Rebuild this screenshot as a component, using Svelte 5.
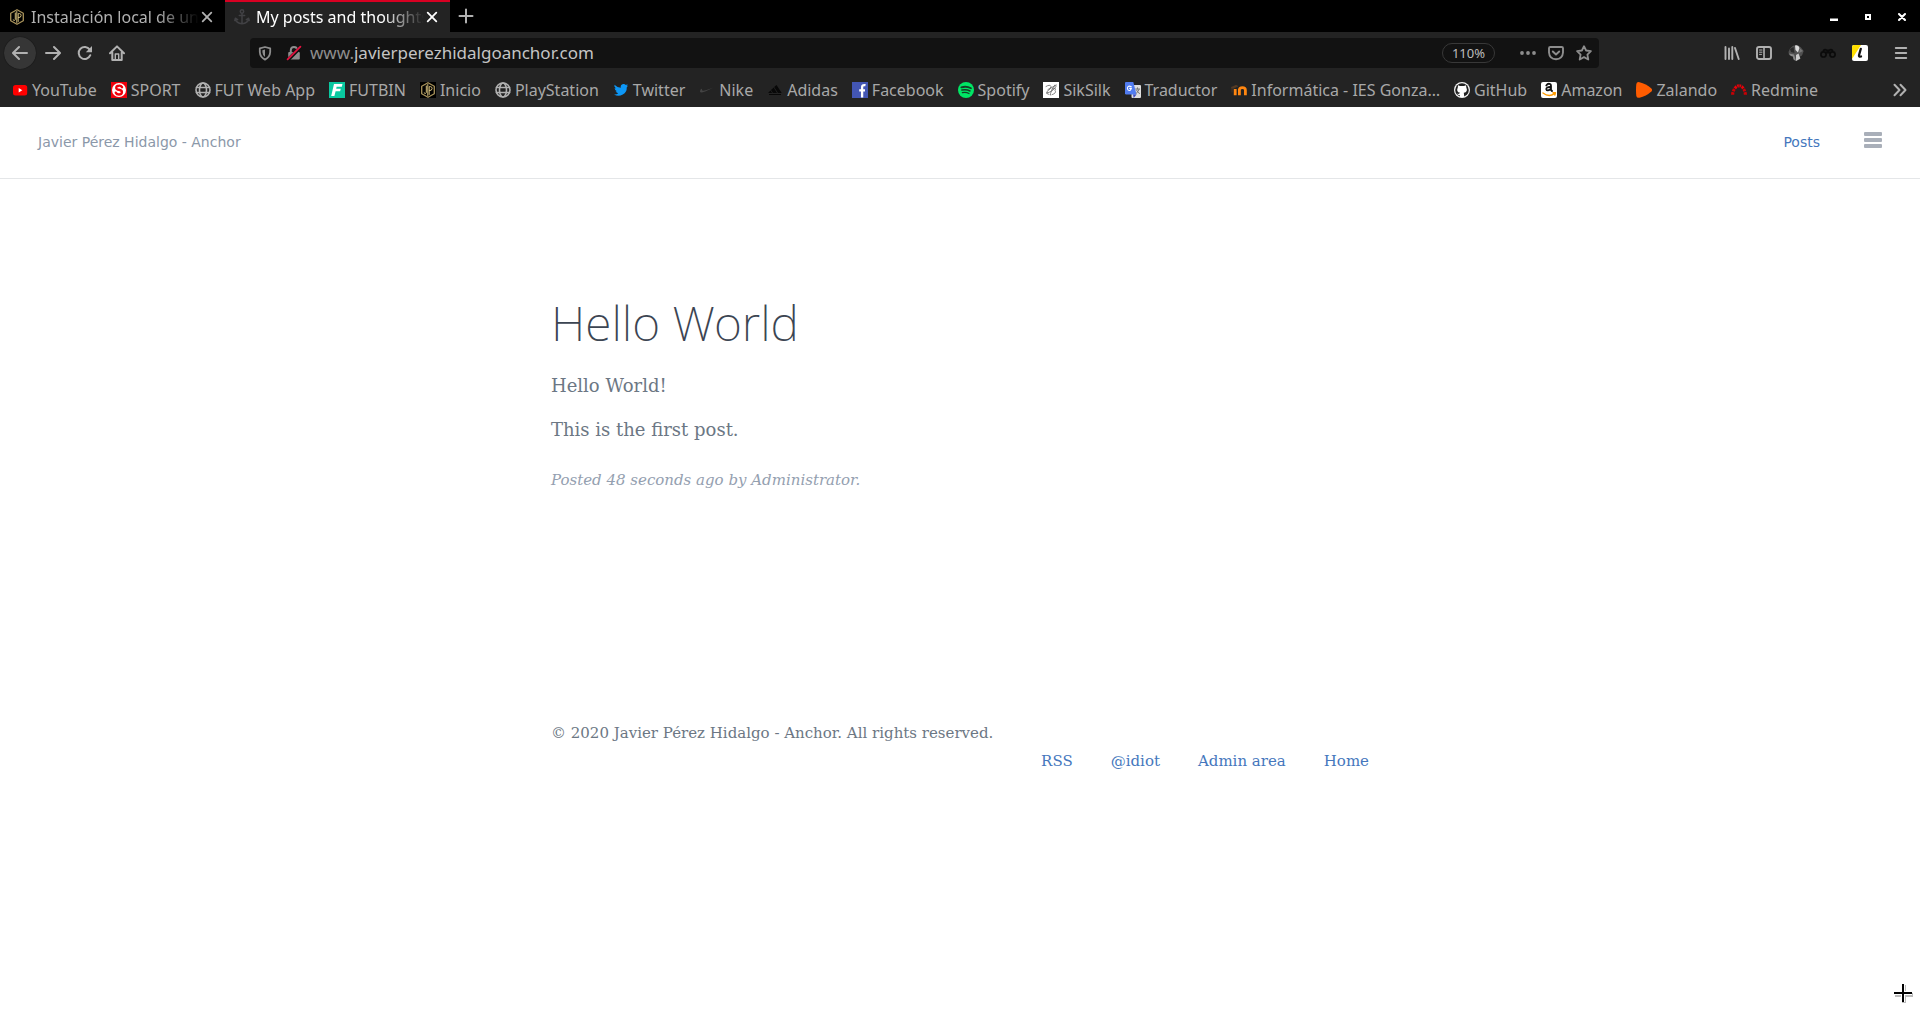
<script>
  const tabs = [
    { title: 'Instalación local de un', icon: 'jp', active: false },
    { title: 'My posts and thoughts', icon: 'anchor', active: true }
  ];
  const bookmarks = [
    ['youtube', 'YouTube'],
    ['sport', 'SPORT'],
    ['globe', 'FUT Web App'],
    ['futbin', 'FUTBIN'],
    ['jpdark', 'Inicio'],
    ['globe', 'PlayStation'],
    ['twitter', 'Twitter'],
    ['nike', 'Nike'],
    ['adidas', 'Adidas'],
    ['facebook', 'Facebook'],
    ['spotify', 'Spotify'],
    ['siksilk', 'SikSilk'],
    ['translate', 'Traductor'],
    ['moodle', 'Informática - IES Gonza…'],
    ['github', 'GitHub'],
    ['amazon', 'Amazon'],
    ['zalando', 'Zalando'],
    ['redmine', 'Redmine']
  ];
  const navButtons = [
    ['back', 'Back'],
    ['forward', 'Forward'],
    ['reload', 'Reload'],
    ['home', 'Home']
  ];
  const urlButtons = [
    ['dots', 'Page actions'],
    ['pocket', 'Save to Pocket'],
    ['star', 'Bookmark this page']
  ];
  const tools = [
    ['library', 'Library'],
    ['sidebar', 'Sidebars'],
    ['avatar', 'Account'],
    ['binoculars', 'Search extension'],
    ['l', 'Extension']
  ];
  const footerLinks = ['RSS', '@idiot', 'Admin area', 'Home'];
  let address = $state('javierperezhidalgoanchor.com');
</script>

{#snippet icon(name)}
  <svg class="icon" viewBox="0 0 16 16" width="16" height="16" aria-hidden="true" fill="none" stroke-linecap="round" stroke-linejoin="round">
    {#if name === 'jp' || name === 'jpdark'}
      {#if name === 'jpdark'}<rect width="16" height="16" fill="#000" />{/if}
      <path d="M8 .7 14.3 4.3V11.7L8 15.3 1.7 11.7V4.3Z" stroke="#a8925a" stroke-width="1.3" />
      <path d="M6.3 4V10.5Q6 12.3 4.2 11M9.2 12.5V4.6H10.5Q12.2 4.8 12.1 6.6 12 8.8 9.4 8.6M7.8 2.5V13.5" stroke="#d3bd7c" stroke-width="1" />
    {:else if name === 'anchor'}
      <g stroke="#414144" stroke-width="1.5"><circle cx="8" cy="2.5" r="1.7" /><path d="M8 4.5V14.6M5.3 6.5H10.7M1.3 9.7Q2 14.3 8 14.8 14 14.3 14.7 9.7M.8 11.5 1.4 9.2 3.6 10.6M15.2 11.5 14.6 9.2 12.4 10.6" /></g>
    {:else if name === 'close'}
      <path d="M3.7 3.7 12.3 12.3M12.3 3.7 3.7 12.3" stroke="currentColor" stroke-width="1.8" />
    {:else if name === 'plus'}
      <path d="M8 1.5V14.5M1.5 8H14.5" stroke="currentColor" stroke-width="2" />
    {:else if name === 'minimise'}
      <path d="M4 9.5H12V12H4Z" fill="#fff" />
    {:else if name === 'maximise'}
      <path d="M6 6H10V10H6Z" stroke="#fff" stroke-width="2" stroke-linejoin="miter" />
    {:else if name === 'closewin'}
      <path d="M5 5 11 11M11 5 5 11" stroke="#fff" stroke-width="2.1" />
    {:else if name === 'back'}
      <path d="M1.2 8H15M7 2 1 8 7 14" stroke="currentColor" stroke-width="2" />
    {:else if name === 'forward'}
      <path d="M14.8 8H1M9 2 15 8 9 14" stroke="currentColor" stroke-width="2" />
    {:else if name === 'reload'}
      <path d="M13.3 10.2A6 6 0 1 1 12.7 4.6" stroke="currentColor" stroke-width="2" /><path d="M15 1V7.2H8.8Z" fill="currentColor" />
    {:else if name === 'home'}
      <path d="M1 8.2 8 1.4 15 8.2M3.3 7.5V15H12.7V7.5" stroke="currentColor" stroke-width="2" /><path d="M6.3 15V9H9.7V15" stroke="currentColor" stroke-width="1.4" />
    {:else if name === 'shield'}
      <path d="M8 2 13.2 3.3V7Q13 12 8 14.6 3 12 2.8 7V3.3Z" stroke="currentColor" stroke-width="1.8" /><path d="M8 4.6V12Q5.5 10.2 5.4 7V5.2Z" fill="currentColor" />
    {:else if name === 'lock'}
      <rect x="2.2" y="7" width="11.6" height="7.5" rx="1" fill="#8d8d8d" /><path d="M4.8 8V5Q5 2 8 2 11 2 11.2 5V8" stroke="#8d8d8d" stroke-width="2" />
      <path d="M2.4 14.4 14.6 2.2" stroke="#111" stroke-width="3.6" /><path d="M1.6 14.4 14.4 1.6" stroke="#e3123f" stroke-width="1.8" />
    {:else if name === 'dots'}
      <g fill="currentColor"><circle cx="2" cy="8" r="1.9" /><circle cx="8" cy="8" r="1.9" /><circle cx="14" cy="8" r="1.9" /></g>
    {:else if name === 'pocket'}
      <path d="M2.3 2H13.7Q15 2 15 3.3V7.5Q14.5 14 8 14.3 1.5 14 1 7.5V3.3Q1 2 2.3 2ZM4.8 6.5 8 9.5 11.2 6.5" stroke="currentColor" stroke-width="1.9" />
    {:else if name === 'star'}
      <path d="M8 1.2 10.1 5.5 14.9 6.2 11.4 9.6 12.3 14.5 8 12.1 3.7 14.5 4.6 9.6 1.1 6.2 5.9 5.5Z" stroke="currentColor" stroke-width="1.8" />
    {:else if name === 'library'}
      <path d="M1.5 2V14M5 3.5V14M8.3 2V14M11 3 14.7 14" stroke="currentColor" stroke-width="1.9" />
    {:else if name === 'sidebar'}
      <rect x="1" y="2" width="14" height="12" rx="2" stroke="currentColor" stroke-width="1.9" /><path d="M8 2V14" stroke="currentColor" stroke-width="1.6" /><path d="M3.5 5H6M3.5 7.2H6M3.5 9.4H5.5" stroke="currentColor" stroke-width="1" />
    {:else if name === 'avatar'}
      <path d="M5 .8Q10-1 13 2.5L15.7 6 14 10.5 12 11.5 12.3 14 8 16 5.2 14.5 5 11.5 1 10 .5 7 2 3.5Z" fill="#505050" /><path d="M7 .6Q10.5-.5 11.5 3L10 7.5 7.5 5Z" fill="#ddd" /><path d="M1 8.5 6 9.5 8 15.7Q5 15 5 11.5 2 11 1 8.5Z" fill="#8a8a8a" /><path d="M8 10 10.5 8.5 12.3 13.5 8 16Z" fill="#ccc" /><path d="M2 4 5.5 2 6.5 8 3 7Z" fill="#292929" /><path d="M12 3.5 15 6 11 8Z" fill="#777" />
    {:else if name === 'binoculars'}
      <g stroke="#0b0b0b"><circle cx="3.5" cy="9.4" r="2.6" stroke-width="1.7" /><circle cx="12.5" cy="9.4" r="2.6" stroke-width="1.7" /><path d="M3.5 5.6Q5 3.6 6.8 5.5H9.2Q11 3.6 12.5 5.6M6.5 7.5H9.5" stroke-width="1.8" /></g>
    {:else if name === 'l'}
      <rect width="16" height="16" rx="2" fill="#fff" /><path d="M2 0H9L0 14V2Q0 0 2 0Z" fill="#ffde00" /><path d="M8.8 3.8 7 10.3Q6.7 12 9 11.5" stroke="#111" stroke-width="2.3" />
    {:else if name === 'menu'}
      <path d="M2.8 3H13.2M2.8 8H13.2M2.8 13H13.2" stroke="currentColor" stroke-width="2" />
    {:else if name === 'more'}
      <path d="M2.5 2.8 7.5 8 2.5 13.2M8.5 2.8 13.5 8 8.5 13.2" stroke="currentColor" stroke-width="2" />
    {:else if name === 'youtube'}
      <rect x="1" y="3" width="14.2" height="10.6" rx="2.5" fill="#f00" /><path d="M6.7 6 10.3 8.2 6.7 10.4Z" fill="#fff" />
    {:else if name === 'sport'}
      <rect width="16" height="16" fill="#f0000c" /><circle cx="8" cy="8" r="7" fill="#fff" /><path d="M11 5.2Q10 3.4 7.8 3.7 5 4 5.3 6.1 5.5 7.5 8 7.8 11 8.2 10.9 10.3 10.6 12.5 8 12.5 5.5 12.5 4.8 10.7" stroke="#f0000c" stroke-width="2.4" />
    {:else if name === 'globe'}
      <g stroke="#b1b1b1" stroke-width="1.6"><circle cx="8" cy="8" r="7" /><ellipse cx="8" cy="8" rx="3.5" ry="7" /><path d="M1.5 5.5H14.5M1.5 10.5H14.5" /></g>
    {:else if name === 'futbin'}
      <rect width="16" height="16" fill="#0ac8a0" /><path d="M5 2H13.5L12.8 4.8H7.6L7.2 6.7H11.8L11.1 9.2H6.6L5.4 14H2.2Z" fill="#fff" />
    {:else if name === 'twitter'}
      <path d="M1.5 2.8Q4 5.6 7.8 5.7 7.2 2.6 10.2 2 11.8 1.8 12.8 2.9L14.7 2.2 13.6 4 15.2 3.6 13.8 5.2Q14 10 9.8 12.5 5.3 15 1 12.4 3.5 12.6 5.3 11.2 3.3 10.9 2.6 9.2H4Q1.7 8.3 1.6 6L3 6.4Q.6 4.6 1.5 2.8Z" fill="#0d97f6" />
    {:else if name === 'nike'}
      <path d="M2 7Q0 10 2 10.5 5 10.5 15 5.3 7 8.7 4.1 8.8 2.4 8.8 3 6.8Z" fill="#444" />
    {:else if name === 'adidas'}
      <path d="M1 11 3.5 8.5 5.2 11ZM4 8 6.7 5.5 10 11H6ZM7.2 5 9.5 3 14.7 11H11ZM2 12H14V13H2Z" fill="#080808" />
    {:else if name === 'facebook'}
      <rect width="16" height="16" fill="#4356b4" /><path d="M13.5 3.2Q9.8 2.5 10.1 5.5V15.5M7.2 8.3H13" stroke="#fff" stroke-width="2.3" stroke-linecap="butt" />
    {:else if name === 'spotify'}
      <circle cx="8" cy="8" r="8" fill="#00e665" /><g stroke="#143d26"><path d="M3.3 5.3Q8.5 3.8 13 6.2" stroke-width="1.8" /><path d="M3.9 8.1Q8.3 7 12 9" stroke-width="1.5" /><path d="M4.3 10.7Q8 9.8 11 11.5" stroke-width="1.2" /></g>
    {:else if name === 'siksilk'}
      <rect width="16" height="16" fill="#fff" /><path d="M3 4.5Q7 2 8 4.5 8 7 4 9.5 2.6 12 6 12.5M5 7.5 13.5 3M11.8 3Q7 10 7.4 13M9 7Q14 5 12 8.5 14 11 9 12.7M3.5 11Q10 10 13 4.5" stroke="#666" stroke-width=".8" />
    {:else if name === 'translate'}
      <rect x="6.5" y="3" width="9.5" height="13" rx="1" fill="#dedede" /><path d="M1 0H8.3L11.5 12.5H1.2Q0 12.5 0 11.3V1Q0 0 1 0Z" fill="#517cf0" /><path d="M8 12.5H11.5L8.7 16Z" fill="#3b49bd" /><path d="M6.3 4.7Q3 3 2.4 6 2.7 9 5.3 8.3L6.4 6.4H4.7" stroke="#fff" stroke-width="1.1" /><path d="M10.7 7H14.7M12.5 5.8V7M14 7.4Q13.3 10 11.2 11.4M11.6 8.2Q12.3 10.5 14.5 11.5" stroke="#777" stroke-width="1" />
    {:else if name === 'moodle'}
      <path d="M0 5.5 5 3.3 6.8 4.2 2.6 6.2ZM1 6V10" fill="#553b25" stroke="#553b25" stroke-width=".7" /><path d="M4.2 7V13.3M8.4 13.3V7.6Q8.8 5.6 11.4 5.6 14.3 5.6 14.4 8V13.3" stroke="#ff8610" stroke-width="2.8" stroke-linecap="butt" />
    {:else if name === 'github'}
      <circle cx="8" cy="8" r="8" fill="#f4f4f4" /><circle cx="8" cy="8" r="6.8" fill="#202020" /><path d="M4 3.2 6 4.1H10L12 3.2 12.3 5.4Q14.3 9.7 9.8 10.8L10.3 15H5.8V13Q4 13.4 3 11.5 5 12.6 6.1 10.8 1.8 9.7 3.8 5.4Z" fill="#fff" />
    {:else if name === 'amazon'}
      <rect width="16" height="16" rx="2" fill="#fff" /><path d="M5.3 3.5Q7 .8 9.5 2.2 10 3 10 4V8L11 9M9.7 5Q5.2 4.8 5.3 7.2 6 9.8 9.6 7" stroke="#111" stroke-width="1.8" /><path d="M2 11Q8 15.5 13.4 11.6M12 10.8 14.5 10.8 13.8 13" stroke="#ff9b00" stroke-width="1.4" />
    {:else if name === 'zalando'}
      <path d="M.3 2Q.7-.3 3.5.2 10 1.5 15.4 6.4 16.7 8 15.4 9.6 10 14.5 3.5 15.8.7 16.2.3 14-.3 8 .3 2Z" fill="#ff5c00" />
    {:else if name === 'redmine'}
      <g fill="#c90005"><path d="M0 12.8.4 9.8 3.4 10.4 3.2 12.8ZM.8 9 2 6.2 4.6 7.8 3.8 9.8Z" /><path d="M2.6 5.4 4.8 3.2 6.4 5.8 5 7.2ZM5.6 2.8 7.8 2.2V5.4L6.8 5.6ZM8.4 2.2 10.6 2.8 9.4 5.6 8.4 5.4ZM11.4 3.2 13.5 5.4 11.2 7.2 9.9 5.8Z" fill="#ed0008" /><path d="M14 6.2 15.2 9 12.2 9.8 11.6 7.8ZM15.6 9.8 16 12.8H12.8L12.6 10.4Z" /></g>
    {/if}
  </svg>
{/snippet}

<div class="browser">
  <div class="tabs">
    {#each tabs as tab}
      <div class="tab" class:active={tab.active}>
        {@render icon(tab.icon)}
        <span class="title">{tab.title}</span>
        <button aria-label="Close tab">{@render icon('close')}</button>
      </div>
    {/each}
    <button class="new" aria-label="New tab">{@render icon('plus')}</button>
    <div class="window">
      <button aria-label="Minimise">{@render icon('minimise')}</button>
      <button aria-label="Maximise">{@render icon('maximise')}</button>
      <button aria-label="Close window">{@render icon('closewin')}</button>
    </div>
  </div>

  <div class="toolbar">
    <div class="history">
      {#each navButtons as [name, label]}
        <button class={name} aria-label={label}>{@render icon(name)}</button>
      {/each}
    </div>
    <div class="urlbar">
      <span class="security">{@render icon('shield')}{@render icon('lock')}</span>
      <label for="address">www.</label>
      <input id="address" type="text" spellcheck="false" bind:value={address} />
      <button class="zoom">110%</button>
      <div class="actions">
        {#each urlButtons as [name, label]}
          <button aria-label={label}>{@render icon(name)}</button>
        {/each}
      </div>
    </div>
    <div class="tools">
      {#each tools as [name, label]}
        <button aria-label={label}>{@render icon(name)}</button>
      {/each}
      <button class="menu" aria-label="Open menu">{@render icon('menu')}</button>
    </div>
  </div>

  <nav class="bookmarks" aria-label="Bookmarks">
    {#each bookmarks as [name, label]}
      <a href="#{label}">{@render icon(name)}<span>{label}</span></a>
    {/each}
    <button aria-label="More bookmarks">{@render icon('more')}</button>
  </nav>
</div>

<header>
  <a class="brand" href="#home">Javier Pérez Hidalgo - Anchor</a>
  <nav>
    <a href="#posts">Posts</a>
    <button class="bars" aria-label="Show search and menu"><i></i><i></i><i></i></button>
  </nav>
</header>

<div class="wrap">
  <main>
    <h1>Hello World</h1>
    <p>Hello World!</p>
    <p>This is the first post.</p>
    <p class="meta">Posted 48 seconds ago by Administrator.</p>
  </main>
  <footer>
    <small>© 2020 Javier Pérez Hidalgo - Anchor. All rights reserved.</small>
    <ul>
      {#each footerLinks as link}
        <li><a href="#{link}">{link}</a></li>
      {/each}
    </ul>
  </footer>
</div>

<svg class="cursor" viewBox="0 0 24 24" width="24" height="24" aria-hidden="true">
  <path d="M13 4V22M4 14H22" stroke="#bbb" stroke-width="4" />
  <path d="M12 3V21M3 12H21" stroke="#fff" stroke-width="4" />
  <path d="M12 3V21M3 12H21" stroke="#000" stroke-width="2" />
</svg>

<style>
  :global(body) {
    background: #fff;
  }
  a {
    color: inherit;
    text-decoration: none;
  }
  button {
    display: flex;
    align-items: center;
    justify-content: center;
    padding: 0;
    border: 0;
    background: none;
    color: inherit;
    font: inherit;
  }
  .icon {
    display: block;
    flex: none;
  }
  .browser {
    background: #232323;
    color: #b1b1b1;
    font: 16px/24px 'Noto Sans', sans-serif;
  }
  .tabs {
    display: flex;
    height: 32px;
    background: #000;
  }
  .tab {
    display: flex;
    align-items: center;
    box-sizing: border-box;
    width: 225px;
    padding: 0 10px 0 9px;
    border-top: 2px solid #000;
  }
  .tab.active {
    border-color: #d70022;
    background: #232323;
    color: #fff;
  }
  .title {
    flex: 1;
    min-width: 0;
    margin-left: 6px;
    overflow: hidden;
    white-space: nowrap;
    mask-image: linear-gradient(to right, #000 75%, transparent);
  }
  .new {
    width: 32px;
  }
  .window {
    display: flex;
    gap: 18px;
    margin-left: auto;
    padding: 2px 10px 0 0;
  }
  .toolbar {
    display: flex;
    align-items: center;
    height: 42px;
    padding-bottom: 1px;
  }
  .history {
    display: flex;
    width: 250px;
    padding-left: 4px;
    box-sizing: border-box;
  }
  .history button {
    width: 32px;
    height: 32px;
  }
  .history .back {
    margin-right: 1px;
    border-radius: 50%;
    background: #363636;
    box-shadow: 0 0 1px #000;
  }
  .urlbar {
    display: flex;
    flex: 1;
    align-items: center;
    height: 30px;
    border-radius: 4px;
    background: #121212;
    color: #8d8d8d;
  }
  .security {
    display: flex;
    gap: 13px;
    padding: 0 8px 0 7px;
  }
  label,
  input {
    font-size: 17px;
  }
  input {
    flex: 1;
    min-width: 0;
    padding: 0;
    border: 0;
    outline: 0;
    background: none;
    color: #c4c4c4;
    font-family: inherit;
    line-height: 24px;
  }
  .zoom {
    height: 20px;
    padding: 0 9px;
    border: 1px solid #383838;
    border-radius: 10px;
    color: #bcbcbc;
    font-size: 13px;
  }
  .actions {
    display: flex;
    gap: 12px;
    padding: 0 7px 0 25px;
  }
  .tools {
    display: flex;
    gap: 16px;
    padding: 0 11px 0 125px;
  }
  .tools .menu {
    margin-left: 9px;
  }
  .bookmarks {
    display: flex;
    align-items: center;
    gap: 14px;
    height: 30px;
    padding: 0 12px 2px;
    overflow: hidden;
    white-space: nowrap;
  }
  .bookmarks a {
    display: flex;
    align-items: center;
    gap: 4px;
    color: #a8a8a8;
  }
  .bookmarks button {
    margin-left: auto;
  }
  header {
    display: flex;
    align-items: center;
    justify-content: space-between;
    height: 69px;
    padding: 0 38px 2px;
    border-bottom: 1px solid #e4e6e8;
    color: #8b98a9;
    font: 14px/20px 'DejaVu Sans', sans-serif;
  }
  header nav {
    display: flex;
    align-items: center;
    gap: 44px;
    color: #4577bd;
  }
  .bars {
    flex-direction: column;
    gap: 2px;
    width: 18px;
    margin-bottom: 3px;
  }
  .bars i {
    width: 18px;
    height: 4px;
    border-radius: 1px;
    background: #a9afb9;
  }
  .wrap {
    box-sizing: border-box;
    max-width: 820px;
    margin: 0 auto;
    padding: 0 1px;
    color: #6c7784;
    font: 18px/26px 'DejaVu Serif', serif;
  }
  main {
    padding-top: 112px;
  }
  h1 {
    margin: 0;
    color: #3c4552;
    font: 200 48px/64px 'Noto Sans', sans-serif;
  }
  p {
    margin: 18px 0;
  }
  .meta {
    margin: 24px 0 0;
    color: #94a0b0;
    font-size: 15px;
    font-style: italic;
  }
  footer {
    margin-top: 225px;
    font-size: 15px;
  }
  small {
    display: block;
    font-size: 15px;
    line-height: 30px;
  }
  ul {
    display: flex;
    justify-content: flex-end;
    gap: 38px;
    margin: 0;
    padding: 0;
    list-style: none;
    color: #4577bd;
  }
  .cursor {
    position: fixed;
    right: 5px;
    bottom: 18px;
  }
</style>
